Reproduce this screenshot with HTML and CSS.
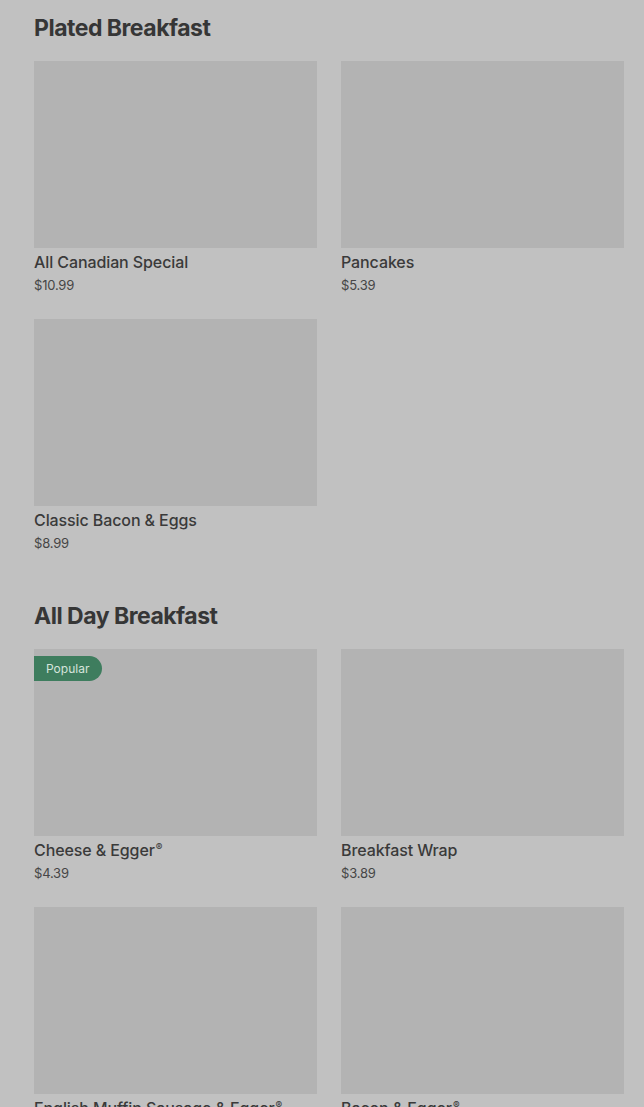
FILE: index.html
```html
<!DOCTYPE html>
<html lang="en">
<head>
<meta charset="utf-8">
<title>Menu</title>
<link rel="stylesheet" href="styles.css">
</head>
<body>
<main class="menu">
  <section class="section">
    <h2 class="section-title">Plated Breakfast</h2>
    <div class="grid">
      <div class="card">
        <div class="thumb"></div>
        <div class="name">All Canadian Special</div>
        <div class="price">$10.99</div>
      </div>
      <div class="card">
        <div class="thumb"></div>
        <div class="name">Pancakes</div>
        <div class="price">$5.39</div>
      </div>
      <div class="card">
        <div class="thumb"></div>
        <div class="name">Classic Bacon &amp; Eggs</div>
        <div class="price">$8.99</div>
      </div>
    </div>
  </section>
  <section class="section">
    <h2 class="section-title">All Day Breakfast</h2>
    <div class="grid">
      <div class="card">
        <div class="thumb"><span class="badge">Popular</span></div>
        <div class="name">Cheese &amp; Egger<span class="reg">®</span></div>
        <div class="price">$4.39</div>
      </div>
      <div class="card">
        <div class="thumb"></div>
        <div class="name">Breakfast Wrap</div>
        <div class="price">$3.89</div>
      </div>
      <div class="card">
        <div class="thumb"></div>
        <div class="name">English Muffin Sausage &amp; Egger<span class="reg">®</span></div>
        <div class="price">$4.59</div>
      </div>
      <div class="card">
        <div class="thumb"></div>
        <div class="name">Bacon &amp; Egger<span class="reg">®</span></div>
        <div class="price">$4.39</div>
      </div>
    </div>
  </section>
</main>
</body>
</html>
```
FILE: styles.css
```css
html, body {
  margin: 0;
  padding: 0;
  background: #c1c1c1;
  overflow: hidden;
}
body {
  font-family: Inter, "Noto Sans", "Liberation Sans", sans-serif;
  color: #383838;
}
.menu {
  padding: 12px 20px 0 34px;
  display: flex;
  flex-direction: column;
  gap: 48px;
}
.section-title {
  margin: 0 0 17px 0;
  font-size: 23px;
  line-height: 32px;
  font-weight: 700;
  letter-spacing: -0.5px;
  color: #363636;
}
.grid {
  display: grid;
  grid-template-columns: 283px 283px;
  column-gap: 24px;
  row-gap: 25px;
}
.card {
  display: flex;
  flex-direction: column;
}
.thumb {
  position: relative;
  height: 187px;
  background: #b3b3b3;
}
.badge {
  position: absolute;
  left: 0;
  top: 7px;
  height: 25px;
  line-height: 25px;
  padding: 0 13px 0 12px;
  background: #3e7d5e;
  color: #d6e4dc;
  font-size: 12px;
  border-radius: 0 13px 13px 0;
}
.name {
  margin-top: 4px;
  font-size: 16px;
  line-height: 20px;
  font-weight: 500;
  letter-spacing: -0.1px;
  color: #3a3a3a;
}
.reg {
  font-size: 10px;
  vertical-align: 5px;
  line-height: 0;
  margin-left: 1px;
}
.price {
  margin-top: 4px;
  font-size: 13px;
  line-height: 18px;
  color: #464646;
  letter-spacing: -0.2px;
}
```
